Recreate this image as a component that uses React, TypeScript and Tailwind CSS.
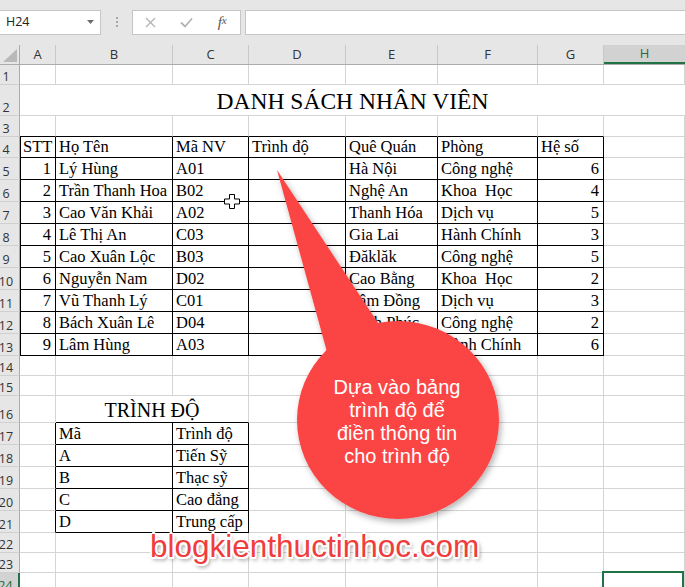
import React from 'react';

// column widths include the 1px grid line on the right edge
const cols = [
  { name: 'A', w: 'w-[36px]' },
  { name: 'B', w: 'w-[117px]' },
  { name: 'C', w: 'w-[76px]' },
  { name: 'D', w: 'w-[97px]' },
  { name: 'E', w: 'w-[92px]' },
  { name: 'F', w: 'w-[100px]' },
  { name: 'G', w: 'w-[66px]' },
  { name: 'H', w: 'w-[81px]' },
];

const rowHeights: Record<number, string> = {
  1: 'h-[20px]',
  2: 'h-[31px]',
  3: 'h-[21px]',
  4: 'h-[21px]',
  14: 'h-[20px]',
  15: 'h-[20px]',
  16: 'h-[27px]',
  22: 'h-[20px]',
  23: 'h-[20px]',
  24: 'h-[20px]',
};

type Value = string | number;

const data: Record<number, Value[]> = {
  4: ['STT', 'Họ Tên', 'Mã NV', 'Trình độ', 'Quê Quán', 'Phòng', 'Hệ số'],
  5: [1, 'Lý Hùng', 'A01', '', 'Hà Nội', 'Công nghệ', 6],
  6: [2, 'Trần Thanh Hoa', 'B02', '', 'Nghệ An', 'Khoa  Học', 4],
  7: [3, 'Cao Văn Khải', 'A02', '', 'Thanh Hóa', 'Dịch vụ', 5],
  8: [4, 'Lê Thị An', 'C03', '', 'Gia Lai', 'Hành Chính', 3],
  9: [5, 'Cao Xuân Lộc', 'B03', '', 'Đăklăk', 'Công nghệ', 5],
  10: [6, 'Nguyễn Nam', 'D02', '', 'Cao Bằng', 'Khoa  Học', 2],
  11: [7, 'Vũ Thanh Lý', 'C01', '', 'Lâm Đồng', 'Dịch vụ', 3],
  12: [8, 'Bách Xuân Lê', 'D04', '', 'Vĩnh Phúc', 'Công nghệ', 2],
  13: [9, 'Lâm Hùng', 'A03', '', 'Bình Dương', 'Hành Chính', 6],
  17: ['', 'Mã', 'Trình độ'],
  18: ['', 'A', 'Tiến Sỹ'],
  19: ['', 'B', 'Thạc sỹ'],
  20: ['', 'C', 'Cao đẳng'],
  21: ['', 'D', 'Trung cấp'],
};

const rowNumbers = Array.from({ length: 24 }, (_, i) => i + 1);

const serif = "font-['Liberation_Serif','Times_New_Roman',serif] text-black";

function FormulaBar() {
  return (
    <div className="flex h-[45px] bg-[#e6e6e6] pt-[10px]">
      <div className="relative flex h-[25px] w-[101px] items-center border border-l-0 border-[#c6c6c6] bg-white pl-[6px] text-[12.5px] text-[#222]">
        H24
        <svg className="absolute left-[87px] top-[9px]" width="7" height="4" viewBox="0 0 7 4">
          <path d="M0 0 H7 L3.5 4 Z" fill="#6d6d6d" />
        </svg>
      </div>
      <div className="flex w-[31px] flex-col items-center gap-[2px] pt-[7px]">
        <span className="h-[2px] w-[2px] bg-[#a8a8a8]" />
        <span className="h-[2px] w-[2px] bg-[#a8a8a8]" />
        <span className="h-[2px] w-[2px] bg-[#a8a8a8]" />
      </div>
      <div className="flex h-[25px] w-[109px] items-center border border-[#c6c6c6] bg-white">
        <div className="flex w-[36px] justify-center">
          <svg width="11" height="11" viewBox="0 0 11 11">
            <path d="M1 1 L10 10 M10 1 L1 10" stroke="#b3b3b3" strokeWidth="1.3" />
          </svg>
        </div>
        <div className="flex w-[36px] justify-center">
          <svg width="13" height="11" viewBox="0 0 13 11">
            <path d="M1 5.5 L5 9.5 L12 1.5" stroke="#b3b3b3" strokeWidth="1.8" fill="none" />
          </svg>
        </div>
        <div className="flex w-[36px] justify-center font-['Liberation_Serif',serif] text-[15px] italic leading-none text-[#555]">
          f<span className="text-[11px]">x</span>
        </div>
      </div>
      <div className="ml-[4px] h-[25px] flex-1 border border-r-0 border-[#c6c6c6] bg-white" />
    </div>
  );
}

function HeaderRow() {
  return (
    <div className="flex h-[20px] border-b border-[#ababab] bg-[#e6e6e6] text-[13px] text-[#333]">
      <div className="relative w-[20px] border-r border-[#ababab]">
        <svg className="absolute left-[3px] top-[4px]" width="14" height="13" viewBox="0 0 14 13">
          <path d="M14 0 V13 H0 Z" fill="#b9b9b9" />
        </svg>
      </div>
      {cols.map((c) =>
        c.name === 'H' ? (
          <div
            key={c.name}
            className={`${c.w} flex items-center justify-center border-b-2 border-[#217346] bg-[#d2d2d2] text-[#1e6b41]`}
          >
            {c.name}
          </div>
        ) : (
          <div key={c.name} className={`${c.w} flex items-center justify-center border-r border-[#c8c8c8]`}>
            {c.name}
          </div>
        )
      )}
    </div>
  );
}

function RowHeader({ n }: { n: number }) {
  if (n === 24) {
    return (
      <div className="flex w-[20px] items-end justify-center border-r-2 border-[#217346] bg-[#d2d2d2] pr-[7px] text-[12.5px] leading-[14px] text-[#1e6b41]">
        {n}
      </div>
    );
  }
  return (
    <div className="flex w-[20px] items-end justify-center border-r border-b border-r-[#ababab] border-b-[#d0d0d0] bg-[#e6e6e6] pr-[7px] text-[12.5px] leading-[14px] text-[#333]">
      {n}
    </div>
  );
}

function Cells({ n }: { n: number }) {
  const values = data[n] ?? [];
  return (
    <>
      {cols.map((c, i) => {
        const v = values[i] ?? '';
        const inT1 = n >= 4 && n <= 13 && i <= 6;
        const inT2 = n >= 17 && n <= 21 && (i === 1 || i === 2);
        const rightBlack = inT1 || inT2 || (n >= 17 && n <= 21 && i === 0);
        const bottomBlack = inT1 || inT2 || (n === 3 && i <= 6);
        const right = rightBlack ? 'border-r-black' : 'border-r-[#d4d4d4]';
        const bottom = bottomBlack ? 'border-b-black' : 'border-b-[#d4d4d4]';
        const leftEdge = inT1 && i === 0 ? 'shadow-[inset_1px_0_0_#000]' : '';
        const align = typeof v === 'number' ? 'justify-end pr-[4px]' : 'pl-[3px]';
        const selected = n === 24 && c.name === 'H';
        return (
          <div
            key={c.name}
            className={`${c.w} relative flex items-end whitespace-pre border-r border-b pb-[1px] text-[16.5px] leading-[18px] ${serif} ${right} ${bottom} ${leftEdge} ${align}`}
          >
            {v}
            {selected && <div className="absolute -left-[2px] -top-[2px] right-0 bottom-0 border-2 border-[#217346]" />}
          </div>
        );
      })}
    </>
  );
}

function SheetRow({ n }: { n: number }) {
  const h = rowHeights[n] ?? 'h-[22px]';
  return (
    <div className={`flex ${h}`}>
      <RowHeader n={n} />
      {n === 2 ? (
        <div className={`flex w-[665px] items-end justify-center border-b border-[#d4d4d4] text-[23.5px] leading-[27px] ${serif}`}>
          DANH SÁCH NHÂN VIÊN
        </div>
      ) : n === 16 ? (
        <>
          <div className="w-[36px] border-r border-b border-[#d4d4d4]" />
          <div className={`flex w-[193px] items-end justify-center border-r border-b border-r-[#d4d4d4] border-b-black text-[20px] leading-[23px] ${serif}`}>
            TRÌNH ĐỘ
          </div>
          <div className="w-[97px] border-r border-b border-[#d4d4d4]" />
          <div className="w-[92px] border-r border-b border-[#d4d4d4]" />
          <div className="w-[100px] border-r border-b border-[#d4d4d4]" />
          <div className="w-[66px] border-r border-b border-[#d4d4d4]" />
          <div className="w-[81px] border-r border-b border-[#d4d4d4]" />
        </>
      ) : (
        <Cells n={n} />
      )}
    </div>
  );
}

function Callout() {
  return (
    <>
      <svg className="pointer-events-none absolute left-0 top-0" width="685" height="587" viewBox="0 0 685 587">
        <defs>
          <filter id="bubbleShadow" x="-20%" y="-20%" width="140%" height="140%">
            <feDropShadow dx="2" dy="3" stdDeviation="3" floodColor="#000" floodOpacity="0.3" />
          </filter>
        </defs>
        <g filter="url(#bubbleShadow)" fill="#fb4444">
          <ellipse cx="398" cy="420" rx="101" ry="99" />
          <polygon points="277,170 380,326 398,420 327,352" />
        </g>
      </svg>
      <div className="absolute left-[297px] top-[376px] w-[200px] text-center font-['Liberation_Sans',Arial,sans-serif] text-[20px] leading-[23px] text-white">
        Dựa vào bảng
        <br />
        trình độ để
        <br />
        điền thông tin
        <br />
        cho trình độ
      </div>
    </>
  );
}

function Watermark() {
  return (
    <div className="absolute left-[150px] top-[532px] font-['Liberation_Sans',Arial,sans-serif] text-[31.5px] leading-[28px] text-[#f03c3c] [text-shadow:-1.5px_-1.5px_0_#fff,1.5px_-1.5px_0_#fff,-1.5px_1.5px_0_#fff,1.5px_1.5px_0_#fff,0_2px_0_#fff,0_-2px_0_#fff,2px_0_0_#fff,-2px_0_0_#fff,2px_3px_4px_rgba(0,0,0,0.55)]">
      blogkienthuctinhoc.com
    </div>
  );
}

function CursorPlus() {
  return (
    <svg className="pointer-events-none absolute left-[224px] top-[194px]" width="16" height="15" viewBox="0 0 16 15">
      <path
        d="M5.5 0.5 H10.5 V5 H15.5 V10 H10.5 V14.5 H5.5 V10 H0.5 V5 H5.5 Z"
        fill="#fff"
        stroke="#000"
        strokeWidth="1"
      />
    </svg>
  );
}

export default function App() {
  return (
    <div className="relative h-[587px] w-[685px] overflow-hidden bg-white font-['Open_Sans',sans-serif]">
      <FormulaBar />
      <HeaderRow />
      {rowNumbers.map((n) => (
        <SheetRow key={n} n={n} />
      ))}
      <Callout />
      <Watermark />
      <CursorPlus />
    </div>
  );
}
